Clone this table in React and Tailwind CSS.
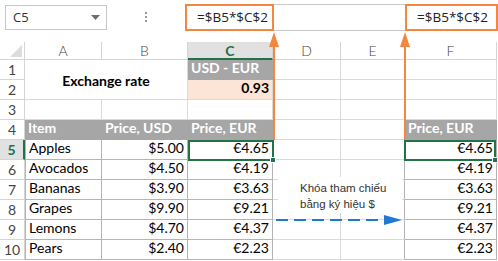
import React from 'react';

const COLS = ['A', 'B', 'C', 'D', 'E', 'F'];

const items = [
  ['Apples', '$5.00', '€4.65'],
  ['Avocados', '$4.50', '€4.19'],
  ['Bananas', '$3.90', '€3.63'],
  ['Grapes', '$9.90', '€9.21'],
  ['Lemons', '$4.70', '€4.37'],
  ['Pears', '$2.40', '€2.23'],
];

const grid = 'border-r border-b border-[#dadada]';
const boxed = 'border-r border-b border-[#b4b4b4]';
const head = 'bg-[#a6a6a6] text-white font-bold px-[3px] flex items-end pb-[1px] border-b border-r border-[#a6a6a6]';

const RowHead = ({ n }) => (
  <div
    className={
      n === 5
        ? 'bg-[#e1e1e1] text-[#217346] font-bold border-r-2 border-r-[#217346] border-b border-b-[#d4d4d4] flex items-center justify-center'
        : 'text-[#444] border-r border-b border-[#d4d4d4] flex items-center justify-center'
    }
  >
    {n}
  </div>
);

const Cell = ({ className = '', children }) => (
  <div className={`px-[3px] flex items-end pb-[1px] whitespace-nowrap overflow-hidden ${className}`}>{children}</div>
);

export default function App() {
  return (
    <div className="relative w-[498px] h-[261px] bg-white overflow-hidden text-[14px] text-black font-['Lato',sans-serif]">
      {/* name box + formula bar */}
      <div className="flex items-start pt-[4px] h-[42px]">
        <div className="ml-[5px] mt-[1px] w-[102px] h-[25px] border border-[#c6c6c6] flex items-center justify-between pl-[7px] pr-[6px] font-['Open_Sans',sans-serif] text-[13px] text-[#333]">
          <span>C5</span>
          <svg width="9" height="6" viewBox="0 0 9 6">
            <path d="M0 0H9L4.5 5Z" fill="#6e6e6e" />
          </svg>
        </div>
        <div className="w-[78px] flex justify-center pt-[8px]">
          <div className="flex flex-col gap-[2px]">
            <span className="w-[2px] h-[2px] bg-[#9a9a9a]" />
            <span className="w-[2px] h-[2px] bg-[#9a9a9a]" />
            <span className="w-[2px] h-[2px] bg-[#9a9a9a]" />
          </div>
        </div>
        <div className="flex-1 h-[27px] border-y border-[#c6c6c6] flex font-['Open_Sans',sans-serif] text-[13.5px] text-[#222]">
          <div className="-my-px w-[89px] h-[27px] border-2 border-[#f5863f] flex items-center justify-end pr-[4px]">=$B5*$C$2</div>
          <div className="flex-1" />
          <div className="-my-px w-[93px] h-[27px] border-2 border-[#f5863f] flex items-center justify-end pr-[8px]">=$B5*$C$2</div>
        </div>
      </div>

      {/* sheet */}
      <div className="grid grid-cols-[25px_77px_86px_85px_68px_64px_92px] grid-rows-[18px_repeat(10,20px)]">
        <div className="relative border-r border-b border-[#d4d4d4]">
          <svg className="absolute right-[2px] bottom-[2px]" width="12" height="12" viewBox="0 0 12 12">
            <path d="M12 0V12H0Z" fill="#dcdcdc" />
          </svg>
        </div>
        {COLS.map((c) => (
          <div
            key={c}
            className={
              c === 'C'
                ? 'bg-[#e1e1e1] text-[#217346] font-bold border-b-2 border-b-[#217346] border-r border-r-[#d4d4d4] flex items-center justify-center'
                : 'text-[#444] border-r border-b border-[#d4d4d4] flex items-center justify-center font-light'
            }
          >
            {c}
          </div>
        ))}

        {/* row 1 */}
        <RowHead n={1} />
        <div className="col-span-2 row-span-2 flex items-center justify-center font-bold border-r border-b border-[#dadada] pt-[2px]">
          Exchange rate
        </div>
        <Cell className={head}>USD - EUR</Cell>
        <Cell className={grid} />
        <Cell className={grid} />
        <Cell className={grid} />

        {/* row 2 */}
        <RowHead n={2} />
        <Cell className="bg-[#fce4d6] font-bold justify-end border-b border-r border-[#dadada]">0.93</Cell>
        <Cell className={grid} />
        <Cell className={grid} />
        <Cell className={grid} />

        {/* row 3 */}
        <RowHead n={3} />
        {COLS.map((c) => (
          <Cell key={c} className={grid} />
        ))}

        {/* row 4 */}
        <RowHead n={4} />
        <Cell className={head}>Item</Cell>
        <Cell className={head}>Price, USD</Cell>
        <Cell className={head}>Price, EUR</Cell>
        <Cell className={grid} />
        <Cell className={grid} />
        <Cell className={head}>Price, EUR</Cell>

        {items.map(([name, usd, eur], i) => (
          <React.Fragment key={name}>
            <RowHead n={i + 5} />
            <Cell className={`${boxed} border-l border-l-[#b4b4b4]`}>{name}</Cell>
            <Cell className={`${boxed} justify-end`}>{usd}</Cell>
            <Cell className={`${boxed} justify-end`}>{eur}</Cell>
            <Cell className={grid} />
            <Cell className={`${grid} border-r-[#b4b4b4]`} />
            <Cell className={`${boxed} justify-end`}>{eur}</Cell>
          </React.Fragment>
        ))}
      </div>

      {/* selection boxes */}
      <div className="absolute left-[188px] top-[140px] w-[86px] h-[21px] border-2 border-[#217346]" />
      <div className="absolute left-[270px] top-[157px] w-[6px] h-[6px] bg-[#217346] border border-white" />
      <div className="absolute left-[404px] top-[140px] w-[92px] h-[21px] border-2 border-[#217346]" />
      <div className="absolute left-[492px] top-[157px] w-[6px] h-[6px] bg-[#217346] border border-white" />

      {/* note */}
      <div className="absolute left-[278px] top-[177px] w-[124px] h-[36px] bg-white pl-[22px] pt-[3px] font-['Liberation_Sans',sans-serif] text-[11.5px] leading-[16px] text-[#333]">
        <div>Khóa tham chiếu</div>
        <div>bằng ký hiệu $</div>
      </div>

      {/* arrows */}
      <svg className="absolute left-0 top-0 pointer-events-none" width="498" height="261" viewBox="0 0 498 261">
        <line x1="274" y1="40" x2="274" y2="140" stroke="#f5863f" strokeWidth="2" />
        <path d="M274 32L279 47H269Z" fill="#f5863f" />
        <line x1="405" y1="40" x2="405" y2="140" stroke="#f5863f" strokeWidth="2" />
        <path d="M405 32L410 47H400Z" fill="#f5863f" />
        <line x1="276" y1="220" x2="386" y2="220" stroke="#1f78d4" strokeWidth="2" strokeDasharray="12 6" />
        <path d="M402 220L384 215V225Z" fill="#1f78d4" />
      </svg>
    </div>
  );
}
